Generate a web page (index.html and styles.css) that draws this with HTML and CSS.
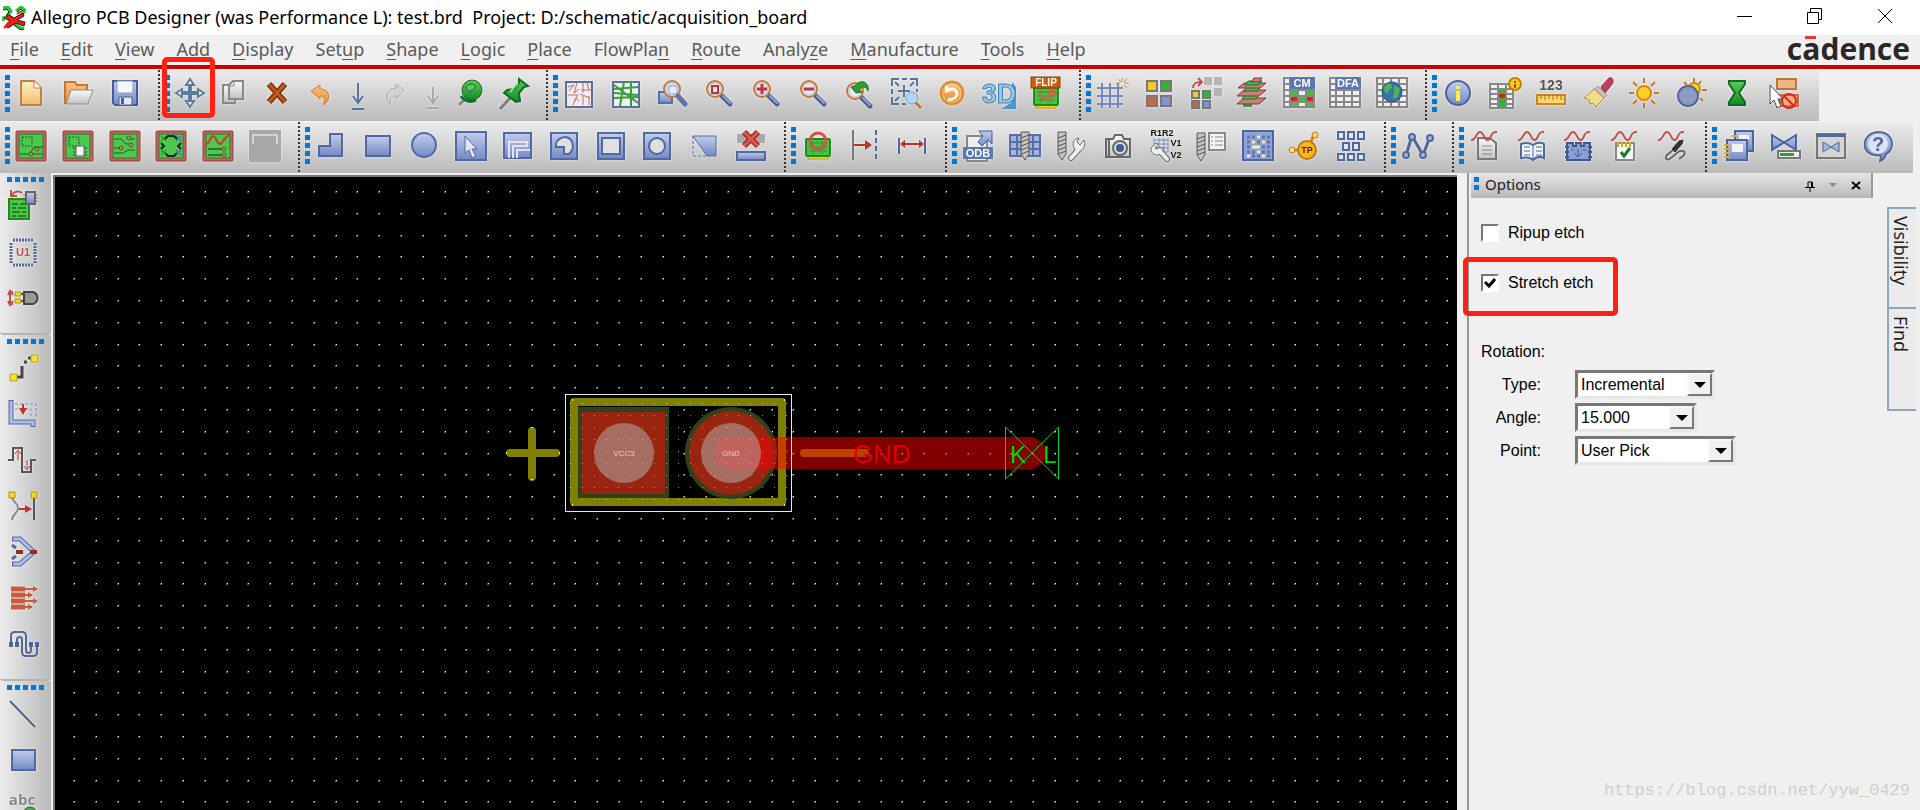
FILE: index.html
```html
<!DOCTYPE html>
<html lang="en">
<head>
  <meta charset="UTF-8">
  <title>Allegro PCB Designer</title>
  <link rel="stylesheet" href="styles.css">
</head>
<body>

<!-- shared gradients and symbols -->
<svg class="defs" aria-hidden="true">
  <defs>
    <linearGradient id="gBlue" x1="0" y1="0" x2="0" y2="1"><stop offset="0" stop-color="#c3cdea"/><stop offset="1" stop-color="#7489c4"/></linearGradient>
    <linearGradient id="gGray" x1="0" y1="0" x2="0" y2="1"><stop offset="0" stop-color="#fafafa"/><stop offset="1" stop-color="#c2c2c2"/></linearGradient>
    <linearGradient id="gPaper" x1="0" y1="0" x2="0" y2="1"><stop offset="0" stop-color="#fff0c8"/><stop offset="1" stop-color="#f2bd6c"/></linearGradient>
    <linearGradient id="gOrange" x1="0" y1="0" x2="0" y2="1"><stop offset="0" stop-color="#fbc583"/><stop offset="1" stop-color="#e68a2e"/></linearGradient>
    <linearGradient id="gGreen" x1="0" y1="0" x2="0" y2="1"><stop offset="0" stop-color="#5ccb5c"/><stop offset="1" stop-color="#128a26"/></linearGradient>
    <symbol id="lens" viewBox="0 0 32 32">
      <path d="M19 19l8 8" stroke="#4a5f94" stroke-width="5" stroke-linecap="round"/>
      <path d="M20 19l7 7" stroke="#93a5d6" stroke-width="2" stroke-linecap="round"/>
      <circle cx="12" cy="12" r="8" fill="#e6e8f6" stroke="#c47830" stroke-width="2"/>
      <circle cx="12" cy="12" r="6" fill="none" stroke="#b4bee0"/>
    </symbol>
    <symbol id="board" viewBox="0 0 32 32">
      <rect x="1" y="1" width="30" height="30" rx="1" fill="#c8605c" stroke="#8c3c3a"/>
      <rect x="4" y="4" width="24" height="24" fill="#4cc84c" stroke="#2c7a34"/>
    </symbol>
    <symbol id="wave" viewBox="0 0 32 32">
      <path d="M2 10c5 1 5-8 9-8s4 9 8 8 2-9 9-8" fill="none" stroke="#c0504d" stroke-width="2"/>
    </symbol>
    <symbol id="pcb" viewBox="0 0 32 32">
      <rect x="6" y="26" width="20" height="3" fill="#ffd42a" stroke="#c09000"/>
      <rect x="4" y="9" width="24" height="17" rx="1" fill="#44c444" stroke="#1f8a1f" stroke-width="2"/>
      <path d="M7 13h18M7 17h18M7 21h18M11 11v13M20 11v13" stroke="#2c9c2c"/>
    </symbol>
    <symbol id="table" viewBox="0 0 32 32">
      <rect x="1" y="1" width="30" height="29" fill="#f0f0f0" stroke="#888" stroke-width="2"/>
      <path d="M1 7h30M1 13h30M1 19h30M1 25h30M7 1v29M15 1v29M23 1v29" stroke="#888" stroke-width="2"/>
    </symbol>
    <symbol id="drill" viewBox="0 0 32 32">
      <path d="M11 2h8v22l-4 6-4-6z" fill="#c4c4c4" stroke="#555"/>
      <path d="M11 8l8-3M11 12l8-3M11 16l8-3M11 20l8-3M11 24l8-3" stroke="#555"/>
    </symbol>
  </defs>
</svg>

<header class="titlebar">
  <svg class="app-icon" viewBox="0 0 24 24" aria-hidden="true">
    <path d="M1 2l5-1 3 4-3 4 4 3M14 5l5-4 4 3-3 5M12 17l5 4 5 2M2 10l-1 5" stroke="#17d033" stroke-width="3"/>
    <path d="M1 4l4-1 2 3-3 4M15 6l4-3 2 2M12 19l5 4 5 1" stroke="#111"/>
    <path d="M2 12l5-3 5 3 9-5 1 3-7 4 8 2-1 4-8-3-8 5-3-2 5-5z" fill="#e8201c" stroke="#401010"/>
    <path d="M2 22l5-6M15 8l5-3" stroke="#e8201c" stroke-width="2"/>
  </svg>
  <h1>Allegro PCB Designer (was Performance L): test.brd&nbsp; Project: D:/schematic/acquisition_board</h1>
  <div class="window-buttons">
    <button aria-label="Minimize"><svg viewBox="0 0 16 16"><path d="M0 8.500h15"/></svg></button>
    <button aria-label="Restore"><svg viewBox="0 0 16 16"><path d="M.5 4.500h11v11H.5zM3.500 4.500v-4h11v11h-3"/></svg></button>
    <button aria-label="Close"><svg viewBox="0 0 16 16"><path d="M1 1l14 14M15 1L1 15"/></svg></button>
  </div>
</header>

<nav class="menubar">
  <a href="#"><u>F</u>ile</a>
  <a href="#"><u>E</u>dit</a>
  <a href="#"><u>V</u>iew</a>
  <a href="#"><u>A</u>dd</a>
  <a href="#"><u>D</u>isplay</a>
  <a href="#">Set<u>u</u>p</a>
  <a href="#"><u>S</u>hape</a>
  <a href="#"><u>L</u>ogic</a>
  <a href="#"><u>P</u>lace</a>
  <a href="#">FlowPla<u>n</u></a>
  <a href="#"><u>R</u>oute</a>
  <a href="#">Analy<u>z</u>e</a>
  <a href="#"><u>M</u>anufacture</a>
  <a href="#"><u>T</u>ools</a>
  <a href="#"><u>H</u>elp</a>
  <span class="logo">c<span class="macron">a</span>dence</span>
</nav>

<div class="toolbar-row">
  <div class="toolbar w-file">
    <button aria-label="New"><svg viewBox="0 0 32 32"><path d="M6 4h13l7 7v17H6z" fill="url(#gPaper)" stroke="#c08040" stroke-width="2"/><path d="M19 4v7h7" fill="#fff" stroke="#c08040"/></svg></button>
    <button aria-label="Open"><svg viewBox="0 0 32 32"><path d="M3 27V5h10l2 3h10v6" fill="url(#gOrange)" stroke="#c07830" stroke-width="2"/><path d="M9 13h22l-5 14H4z" fill="url(#gGray)" stroke="#888"/></svg></button>
    <button aria-label="Save"><svg viewBox="0 0 32 32"><path d="M4 4h24v24H6l-2-2z" fill="url(#gBlue)" stroke="#475c98" stroke-width="2"/><path d="M8 4h16v12H8z" fill="#f6f7fc" stroke="#8a98c4"/><path d="M10 20h13v8H10z" fill="#e5e8f2" stroke="#475c98"/><path d="M12 21h3v6h-3z" fill="#475c98"/></svg></button>
  </div>
  <div class="toolbar w-edit">
    <button aria-label="Move" class="marked"><svg viewBox="0 0 32 32"><path d="M16 2l4 6h-3v7h7v-3l6 4-6 4v-3h-7v7h3l-4 6-4-6h3v-7H8v3l-6-4 6-4v3h7V8h-3z" fill="#e6eef4" stroke="#5d7d9c" stroke-width="2"/></svg></button>
    <button aria-label="Copy"><svg viewBox="0 0 32 32"><path d="M6 8h12v18H6z" fill="url(#gGray)" stroke="#888" stroke-width="2"/><path d="M16 4h10v18H12V8z" fill="url(#gGray)" stroke="#888" stroke-width="2"/><path d="M17 4v5h-5" stroke="#888"/></svg></button>
    <button aria-label="Delete"><svg viewBox="0 0 32 32"><path d="M8 7l16 18M24 7L8 25" stroke="#7c2c08" stroke-width="6"/><path d="M8 7l16 18M24 7L8 25" stroke="#c4581c" stroke-width="3"/></svg></button>
    <button aria-label="Undo"><svg viewBox="0 0 32 32"><path d="M7 14l9-6v4c11 0 11 12 3 16 3-6 1-9-3-9v3z" fill="url(#gOrange)" stroke="#c87830"/></svg></button>
    <button aria-label="Undo steps" class="narrow"><svg viewBox="0 0 32 32"><path d="M16 6v20M11 19l5 7 5-7M10 32h12" stroke="#54759a" stroke-width="2"/></svg></button>
    <button aria-label="Redo"><svg viewBox="0 0 32 32"><path d="M25 13l-8-6v4C6 11 5 23 12 28c-2-6 0-9 5-9v3z" fill="#d2d2d2" stroke="#a8a8a8"/></svg></button>
    <button aria-label="Redo steps" class="narrow"><svg viewBox="0 0 32 32"><path d="M16 10v16M11 19l5 7 5-7M10 31h12" stroke="#aaa" stroke-width="2"/></svg></button>
    <button aria-label="Fix"><svg viewBox="0 0 32 32"><path d="M4 28l9-9" stroke="#888" stroke-width="3"/><path d="M6 19c3 5 10 7 15 4" stroke="#14702a" stroke-width="3"/><circle cx="17" cy="13" r="10" fill="url(#gGreen)" stroke="#0f6420"/><path d="M11 10c5-6 12-2 8 2s-7 2-8-2z" fill="#5fc46c" stroke="#0f6420"/></svg></button>
    <button aria-label="Unfix"><svg viewBox="0 0 32 32"><path d="M2 32l11-12" stroke="#7c7c7c" stroke-width="3"/><path d="M21 2l9 7-4 1-5 6 1 8-4 1-12-9 3-3 7-1 5-6z" fill="url(#gGreen)" stroke="#0f6a22" stroke-width="2"/><path d="M12 15l8-9" stroke="#8de08d" stroke-width="2"/></svg></button>
  </div>
  <div class="toolbar w-view">
    <button aria-label="Unrats all"><svg viewBox="0 0 32 32"><rect x="3" y="5" width="26" height="25" fill="#eeeef2" stroke="#5870a0" stroke-width="2"/><path d="M5 10l6-2-5 6M14 6l-3 10 5-4M5 18h10l-4 6M20 6v10M18 13h10M24 6l2 7M10 28l3-7 3 3M20 19v9M17 17l10 4M26 19v9" stroke="#c86a68"/></svg></button>
    <button aria-label="Rats all"><svg viewBox="0 0 32 32"><rect x="3" y="5" width="26" height="25" fill="#eef2ee" stroke="#5870a0" stroke-width="2"/><path d="M4 12l24-2M4 8l24 18M14 5l-4 24M4 21l24-1M21 5v24M4 16l24 2" stroke="#3a9c3a" stroke-width="2"/></svg></button>
    <button aria-label="Zoom points"><svg viewBox="0 0 32 32"><path d="M2 15h13v11H2z" fill="url(#gBlue)" stroke="#5870a0" stroke-width="2"/><circle cx="15" cy="12" r="8" fill="#ccd8f0" stroke="#c47830" stroke-width="2"/><path d="M12 9h8v8h-8z" fill="#e6ebf8" stroke="#93a5d6"/><path d="M21 19l7 8" stroke="#5f74ac" stroke-width="5" stroke-linecap="round"/></svg></button>
    <button aria-label="Zoom fit"><svg viewBox="0 0 32 32"><use href="#lens"/><path d="M9 9h6v7H9z" stroke="#c43434" stroke-width="2"/></svg></button>
    <button aria-label="Zoom in"><svg viewBox="0 0 32 32"><use href="#lens"/><path d="M12 7v10M7 12h10" stroke="#c43434" stroke-width="3"/></svg></button>
    <button aria-label="Zoom out"><svg viewBox="0 0 32 32"><use href="#lens"/><path d="M7 12h10" stroke="#c43434" stroke-width="3"/></svg></button>
    <button aria-label="Zoom previous"><svg viewBox="0 0 32 32"><use href="#lens" y="2"/><path d="M8 10l5 6 6-1-3-2c3-4 7-4 9 1 2-9-8-13-13-5z" fill="#2f9e2f" stroke="#1c701c"/></svg></button>
    <button aria-label="Zoom world"><svg viewBox="0 0 32 32"><path d="M2 9V2h7M20 2h7v7M2 20v7h7M12 2h5M2 12v5M27 12v3M12 27h4M14 8v12M8 14h12M5 5l4 4M24 5l-4 4M5 24l4-4" stroke="#54759a" stroke-width="2"/><path d="M25 25l6 6" stroke="#c47830" stroke-width="3"/><circle cx="22" cy="21" r="6" fill="#aed6f4" stroke="#6f9cc4"/></svg></button>
    <button aria-label="Refresh"><svg viewBox="0 0 32 32"><circle cx="16" cy="16" r="11" fill="#fff4dc" stroke="#e09030" stroke-width="3"/><circle cx="16" cy="16" r="9" fill="url(#gOrange)"/><path d="M12 22c6 2 12-4 7-9-2-2-5-1-6 0" stroke="#fffbe8" stroke-width="3"/><path d="M9 8v8l8-3z" fill="#fffbe8"/></svg></button>
    <button aria-label="3D view"><svg viewBox="0 0 32 32"><path d="M18 32h15V10l-4-5v20z" fill="#4f96cc"/><text class="icon-text t3d" x="16" y="26">3D</text></svg></button>
    <button aria-label="Flip design"><svg viewBox="0 0 32 32"><use href="#pcb" y="2"/><path d="M9 16c3 8 12 8 13 1M18 17l4-5 4 6" stroke="#d0604c" stroke-width="3"/><rect x="1" y="0" width="29" height="11" fill="#c85e10" stroke="#8e3c04"/><text class="icon-text flip" x="16" y="9">FLIP</text></svg></button>
  </div>
  <div class="toolbar w-setup">
    <button aria-label="Grid toggle"><svg viewBox="0 0 32 32"><path d="M6 6v25M14 6v25M22 6v25M1 11h26M1 19h26M1 27h26" stroke="#7488c0" stroke-width="2"/><path d="M26 1v4M26 9v3M20 6h4M28 6h5M22 2l3 3M31 2l-3 3M28 8l3 3" stroke="#d4852c"/></svg></button>
    <button aria-label="Color dialog"><svg viewBox="0 0 32 32"><g stroke="#777" stroke-width="2"><rect x="4" y="4" width="10" height="10" fill="#ffc81e"/><rect x="18" y="4" width="10" height="10" fill="#3cae3c"/><rect x="4" y="19" width="10" height="10" fill="#c86848"/><rect x="18" y="19" width="10" height="10" fill="#7f95cf"/></g></svg></button>
    <button aria-label="Swap colors"><svg viewBox="0 0 32 32"><path d="M15 0h8v8h-8zM25 0h8v8h-8zM25 11h8v8h-8z" fill="#b4b4b4"/><g stroke="#777" stroke-width="2"><rect x="3" y="14" width="7" height="7" fill="#ffc81e"/><rect x="14" y="14" width="7" height="7" fill="#3cae3c"/><rect x="3" y="24" width="7" height="7" fill="#c86848"/><rect x="14" y="24" width="7" height="7" fill="#7f95cf"/></g><path d="M4 11c0-5 3-6 8-6M9 1l4 4-4 4" stroke="#c0504d" stroke-width="2"/></svg></button>
    <button aria-label="Cross section"><svg viewBox="0 0 32 32"><path d="M7 27h9v3H7z" fill="#2fa43c"/><path d="M8 21h22l-7 6H1z" fill="#cc7c78" stroke="#7c3230"/><path d="M9 18h14l-3 4H6z" fill="#48bc50" stroke="#12702a"/><path d="M8 13h22l-7 6H1z" fill="#cc7c78" stroke="#7c3230"/><path d="M11 10h14l-4 4H7z" fill="#48bc50" stroke="#12702a"/><path d="M8 6h22l-6 5H2z" fill="#cc7c78" stroke="#7c3230"/><path d="M12 4h14l-4 4H9z" fill="#48bc50" stroke="#12702a"/><path d="M18 1h8l-3 4h-8z" fill="#cc7c78" stroke="#7c3230"/></svg></button>
    <button aria-label="Constraint manager"><svg viewBox="0 0 32 32"><use href="#table"/><path d="M8 14h6v4H8zM24 14h6v4h-6zM8 26h6v3H8zM16 20h6v4h-6zM24 26h6v3h-6z" fill="#3cc43c"/><path d="M8 20h6v4H8zM24 20h6v4h-6z" fill="#e81c1c"/><path d="M7 0h25v12H7z" fill="#5878b4"/><text class="icon-text head" x="19" y="10">CM</text></svg></button>
    <button aria-label="DFA spreadsheet"><svg viewBox="0 0 32 32"><use href="#table"/><path d="M7 0h25v12H7z" fill="#5878b4"/><text class="icon-text head" x="19" y="10">DFA</text></svg></button>
    <button aria-label="Web table"><svg viewBox="0 0 32 32"><use href="#table"/><circle cx="16" cy="15" r="10" fill="#3a72a8" stroke="#28508a"/><path d="M9 9c4-4 7-2 7 1s-5 3-4 7c-4-1-5-5-3-8zM18 8l6 4-2 8-5 2 1-6z" fill="#4ab458"/></svg></button>
  </div>
  <div class="toolbar w-info">
    <button aria-label="Show element"><svg viewBox="0 0 32 32"><circle cx="16" cy="16" r="12" fill="url(#gBlue)" stroke="#4c659f" stroke-width="2"/><path d="M16 9v3M16 14v10" stroke="#ffee3c" stroke-width="4"/></svg></button>
    <button aria-label="Constraint info"><svg viewBox="0 0 32 32"><path d="M1 7h23v24H1zM1 12h23M1 17h23M1 22h23M1 27h23M9 7v24M17 7v24" fill="#f0f0f0" stroke="#888" stroke-width="2"/><path d="M10 13h6v17h-6z" fill="#3cae3c"/><path d="M10 17h6v4h-6z" fill="#e01c1c"/><circle cx="26" cy="7" r="6" fill="#ffc81e" stroke="#c08000" stroke-width="2"/><path d="M26 4v2M26 7v4" stroke="#8e5c00" stroke-width="2"/></svg></button>
    <button aria-label="Measure"><svg viewBox="0 0 32 32"><text class="icon-text ruler" x="16" y="13">123</text><rect x="2" y="18" width="28" height="9" fill="#ffd66a" stroke="#c8852c" stroke-width="2"/><path d="M6 18v4M10 18v5M14 18v4M18 18v5M22 18v4M26 18v5" stroke="#a86814"/></svg></button>
    <button aria-label="Highlight"><svg viewBox="0 0 32 32"><path d="M19 10l8-9c4-1 5 3 3 6l-7 9z" fill="#c43c64" stroke="#8e2444"/><path d="M16 9l9 9-3 3-10-9z" fill="#d8b8c0" stroke="#999"/><path d="M12 12l10 9-8 9-3-4-3 1-1-4-5-2z" fill="#f0dc8a" stroke="#a48a34"/></svg></button>
    <button aria-label="Shadow off"><svg viewBox="0 0 32 32"><path d="M16 1v5M16 26v5M1 16h5M26 16h5M5 5l4 4M23 23l4 4M27 5l-4 4M9 23l-4 4" stroke="#c8762c" stroke-width="2"/><circle cx="16" cy="16" r="7" fill="#ffd01e" stroke="#d08a20" stroke-width="2"/></svg></button>
    <button aria-label="Shadow on"><svg viewBox="0 0 32 32"><path d="M19 1v5M27 13h5M26 4l-3 4M9 5l3 3M25 21l3 3" stroke="#c8762c" stroke-width="2"/><circle cx="19" cy="12" r="6" fill="#ffd01e" stroke="#d08a20" stroke-width="2"/><circle cx="13" cy="19" r="10" fill="#8c9cc0" stroke="#51689a" stroke-width="2"/></svg></button>
    <button aria-label="Waive"><svg viewBox="0 0 32 32"><path d="M8 4h16v3l-6 9 6 9v3H8v-3l6-9-6-9z" fill="url(#gGreen)" stroke="#0f6a22" stroke-width="2"/></svg></button>
    <button aria-label="Deselect"><svg viewBox="0 0 32 32"><rect x="9" y="2" width="19" height="10" fill="#f0b482" stroke="#b4783c" stroke-width="2"/><rect x="12" y="18" width="18" height="11" fill="#f0b482" stroke="#b4783c" stroke-width="2"/><circle cx="21" cy="24" r="7" stroke="#f01c1c" stroke-width="2"/><path d="M16 19l10 10" stroke="#f01c1c" stroke-width="2"/><path d="M2 8v19l4-4 3 8 4-2-3-7h5z" fill="#fff" stroke="#444"/></svg></button>
  </div>
</div>

<div class="toolbar-row lower">
  <div class="toolbar w-app">
    <button aria-label="General edit"><svg viewBox="0 0 32 32"><use href="#board"/><path d="M7 7h10v9H7z" stroke="#235c23" stroke-dasharray="2 1"/><path d="M5 24h9M16 22l3-5h9M18 24h10" stroke="#235c23"/><circle cx="16" cy="24" r="2" stroke="#a03030"/><circle cx="22" cy="19" r="2" stroke="#a03030"/></svg></button>
    <button aria-label="Placement edit"><svg viewBox="0 0 32 32"><use href="#board"/><path d="M7 7h10v9H7z" stroke="#235c23" stroke-dasharray="2 1"/><path d="M11 18h14M11 22h14M11 25h14" stroke="#444"/><rect x="14" y="16" width="8" height="10" fill="#f2f2f2" stroke="#666"/></svg></button>
    <button aria-label="Etch edit"><svg viewBox="0 0 32 32"><use href="#board"/><path d="M5 9h7l5 5h3M5 18h6M26 9h-4M5 23h9l5-3h7" stroke="#235c23"/><circle cx="20" cy="8" r="2" stroke="#a03030"/><circle cx="22" cy="15" r="2" stroke="#a03030"/><circle cx="12" cy="18" r="2" stroke="#a03030"/></svg></button>
    <button aria-label="Flow planning"><svg viewBox="0 0 32 32"><use href="#board"/><path d="M10 9l3-3h6l3 3M10 23l3 3h6l3-3M6 13l3 3-3 3M26 13l-3 3 3 3" stroke="#222" stroke-width="2"/><path d="M6 6l5 5M11 6l-5 5M21 6l5 5M26 6l-5 5M6 20l5 5M11 20l-5 5M21 20l5 5M26 20l-5 5" stroke="#37598a"/></svg></button>
    <button aria-label="Signal integrity"><svg viewBox="0 0 32 32"><use href="#board"/><path d="M4 14c4 0 4-8 7-8s4 8 7 8 4-8 10-9" stroke="#d03434" stroke-width="2"/><path d="M6 19h14M6 25h14" stroke="#2f7434" stroke-width="2"/><circle cx="22" cy="19" r="2" stroke="#a03030"/><circle cx="22" cy="25" r="2" stroke="#a03030"/></svg></button>
    <button aria-label="RF edit" disabled><svg viewBox="0 0 32 32"><path d="M0 0h32v32H0z" fill="#a8a8a8"/><path d="M4 14V5h24v9" stroke="#d4d4d4" stroke-width="2"/></svg></button>
  </div>
  <div class="toolbar w-shape">
    <button aria-label="Polygon shape"><svg viewBox="0 0 32 32"><path d="M15 4h12v22H4V16h11z" fill="url(#gBlue)" stroke="#5068a4" stroke-width="2"/></svg></button>
    <button aria-label="Rectangle shape"><svg viewBox="0 0 32 32"><path d="M4 6h24v20H4z" fill="url(#gBlue)" stroke="#5068a4" stroke-width="2"/></svg></button>
    <button aria-label="Circle shape"><svg viewBox="0 0 32 32"><circle cx="16" cy="15" r="12" fill="url(#gBlue)" stroke="#5068a4" stroke-width="2"/></svg></button>
    <button aria-label="Select shape"><svg viewBox="0 0 32 32"><path d="M1 2h30v28H1z" fill="url(#gBlue)" stroke="#5068a4" stroke-width="2"/><path d="M10 6v17l4-3 3 8 4-2-4-7h5z" fill="#e2e5ee" stroke="#5068a4"/></svg></button>
    <button aria-label="Edit boundary"><svg viewBox="0 0 32 32"><path d="M2 3h27v25H2z" fill="url(#gBlue)" stroke="#5068a4" stroke-width="2"/><path d="M7 28V12h18v4H11v12M15 28v-8h13" stroke="#e2e5ee" stroke-width="2"/></svg></button>
    <button aria-label="Polygon void"><svg viewBox="0 0 32 32"><path d="M3 3h26v26H3z" fill="url(#gBlue)" stroke="#5068a4" stroke-width="2"/><path d="M8 17v-3c1-5 6-7 10-7 8 2 9 12 3 17h-5v-7z" fill="#e0e0e0" stroke="#5068a4" stroke-width="2"/></svg></button>
    <button aria-label="Rectangle void"><svg viewBox="0 0 32 32"><path d="M3 3h26v26H3z" fill="url(#gBlue)" stroke="#5068a4" stroke-width="2"/><path d="M7 8h18v16H7z" fill="#e0e0e0" stroke="#5068a4" stroke-width="2"/></svg></button>
    <button aria-label="Circle void"><svg viewBox="0 0 32 32"><path d="M3 3h26v26H3z" fill="url(#gBlue)" stroke="#5068a4" stroke-width="2"/><circle cx="16" cy="16" r="8" fill="#e0e0e0" stroke="#5068a4" stroke-width="2"/></svg></button>
    <button aria-label="Delete islands"><svg viewBox="0 0 32 32"><path d="M5 6h23v20H19z" fill="url(#gBlue)" stroke="#5068a4"/><path d="M5 6v20h14" stroke="#5068a4" stroke-dasharray="3 2"/></svg></button>
    <button aria-label="Delete shape"><svg viewBox="0 0 32 32"><path d="M2 4h28v9H2z" fill="#aaa"/><path d="M2 22h28v8H2z" fill="url(#gBlue)" stroke="#5068a4" stroke-width="2"/><path d="M9 2l14 14M23 2L9 16" stroke="#9c2c20" stroke-width="6"/><path d="M9 2l14 14M23 2L9 16" stroke="#e05848" stroke-width="3"/></svg></button>
  </div>
  <div class="toolbar w-dim">
    <button aria-label="Dimension environment"><svg viewBox="0 0 32 32"><use href="#pcb"/><circle cx="16" cy="11" r="8" stroke="#d85048" stroke-width="3"/></svg></button>
    <button aria-label="Linear dimension"><svg viewBox="0 0 32 32"><path d="M4 0v30" stroke="#777" stroke-width="2"/><path d="M27 0v30" stroke="#51689a" stroke-width="2" stroke-dasharray="5 3"/><path d="M5 15h13" stroke="#c03030" stroke-width="2"/><path d="M16 10l7 5-7 5z" fill="#c03030"/></svg></button>
    <button aria-label="Distance"><svg viewBox="0 0 32 32"><path d="M3 8v16M29 8v16" stroke="#51689a" stroke-width="2"/><path d="M6 14h20" stroke="#c03030" stroke-width="2"/><path d="M9 10v8l-5-4zM23 10v8l5-4z" fill="#c03030"/></svg></button>
  </div>
  <div class="toolbar w-mfg">
    <button aria-label="ODB++ out"><svg viewBox="0 0 32 32"><path d="M5 6h20v25H5z" fill="#eee" stroke="#888" stroke-width="2"/><path d="M17 1h13v13l-4-4-6 6-4-4 5-6z" fill="url(#gBlue)" stroke="#40588c"/><path d="M1 17h30v12H1z" fill="#5878b4"/><text class="icon-text head" x="16" y="27">ODB</text></svg></button>
    <button aria-label="NC route"><svg viewBox="0 0 32 32"><path d="M1 5h30v21H1zM1 12h30M1 19h30M8 5v21M24 5v21" fill="#a4b4e0" stroke="#566fa8" stroke-width="2"/><use href="#drill" x="1"/></svg></button>
    <button aria-label="NC parameters"><svg viewBox="0 0 32 32"><use href="#drill" x="-8"/><path d="M16 28l7-8" stroke="#666" stroke-width="6" stroke-linecap="round"/><path d="M29 10l-4 5-3-3 2-4c-6 1-7 6-5 10l2 3c5 2 11-4 8-11z" fill="#eee" stroke="#666"/><path d="M16 28l8-9" stroke="#eee" stroke-width="4" stroke-linecap="round"/></svg></button>
    <button aria-label="Artwork"><svg viewBox="0 0 32 32"><path d="M4 9h7l2-4h7l2 4h6v18H4z" fill="url(#gGray)" stroke="#666" stroke-width="2"/><path d="M7 9v18" stroke="#666" stroke-width="2"/><circle cx="18" cy="18" r="7" fill="#ddd" stroke="#666" stroke-width="2"/><circle cx="18" cy="18" r="4" fill="#415c94"/></svg></button>
    <button aria-label="Auto rename"><svg viewBox="0 0 32 32"><path d="M5 10h14M5 14h14M5 18h14M5 22h14M5 8v14M10 8v14M15 8v14M19 8v14" stroke="#7488c0"/><path d="M10 20l8 9" stroke="#666" stroke-width="6" stroke-linecap="round"/><path d="M2 18l5-5 2 1-3 4 3 2 4-3 1 3-4 5c-5 1-9-3-8-7z" fill="#eee" stroke="#666"/><path d="M10 20l8 9" stroke="#eee" stroke-width="4" stroke-linecap="round"/><text class="icon-text mini" x="13" y="6">R1R2</text><text class="icon-text mini" x="27" y="16">V1</text><text class="icon-text mini" x="27" y="28">V2</text></svg></button>
    <button aria-label="Drill legend"><svg viewBox="0 0 32 32"><use href="#drill" x="-9" y="1"/><path d="M14 3h16v17H14z" fill="#f4f4f4" stroke="#888" stroke-width="2"/><path d="M16 7h2M20 7h8M16 11h2M20 11h8M16 15h2M20 15h8" stroke="#888"/></svg></button>
    <button aria-label="Drill customization"><svg viewBox="0 0 32 32"><path d="M1 1h30v29H1z" fill="#8fa3d8" stroke="#4c659f" stroke-width="2"/><path d="M5 7h23M5 12h23M5 17h23M5 22h23M5 26h23" stroke="#5d76b0" stroke-width="3" stroke-dasharray="3 2"/><path d="M15 7h3M10 12h3M20 12h3M10 17h8M15 22h3M5 26h3M20 26h3" stroke="#fff0b4" stroke-width="3"/></svg></button>
    <button aria-label="Testprep"><svg viewBox="0 0 32 32"><path d="M4 20h10M22 14l4-10" stroke="#c8861c" stroke-width="3"/><circle cx="4" cy="20" r="3" fill="#ffd97a" stroke="#b87814"/><circle cx="27" cy="5" r="3" fill="#ffd97a" stroke="#b87814"/><circle cx="19" cy="20" r="9" fill="#ffb41e" stroke="#b87814" stroke-width="2"/><text class="icon-text tp" x="19" y="23">TP</text></svg></button>
    <button aria-label="Thieving"><svg viewBox="0 0 32 32"><g fill="#dfe6f6" stroke="#51689a" stroke-width="2"><rect x="3" y="2" width="6" height="7"/><rect x="13" y="2" width="6" height="7"/><rect x="23" y="2" width="6" height="7"/><rect x="8" y="13" width="6" height="7"/><rect x="18" y="13" width="6" height="7"/><rect x="3" y="24" width="6" height="6"/><rect x="13" y="24" width="6" height="6"/><rect x="23" y="24" width="6" height="6"/></g></svg></button>
  </div>
  <div class="toolbar w-path">
    <button aria-label="Net schedule"><svg viewBox="0 0 32 32"><path d="M4 25L10 6l11 19 7-18" stroke="#51689a" stroke-width="3"/><g fill="#a8b6de" stroke="#51689a" stroke-width="2"><circle cx="4" cy="25" r="3"/><circle cx="10" cy="7" r="3"/><circle cx="21" cy="25" r="3"/><circle cx="28" cy="8" r="3"/></g></svg></button>
  </div>
  <div class="toolbar w-si">
    <button aria-label="Signal model"><svg viewBox="0 0 32 32"><path d="M9 8h12l6 5v16H9z" fill="url(#gGray)" stroke="#777" stroke-width="2"/><path d="M13 16h10M13 20h10M13 24h10" stroke="#888"/><use href="#wave"/></svg></button>
    <button aria-label="Signal library"><svg viewBox="0 0 32 32"><use href="#wave"/><path d="M5 14c5-2 9-1 12 1 3-2 7-3 11-1v14c-4-2-8-1-11 2-3-3-7-3-12-2z" fill="#f2f4fa" stroke="#51689a" stroke-width="2"/><path d="M17 15v14M8 17h6M8 21h6M8 25h6M20 17h6M20 21h6M20 25h6" stroke="#51689a"/></svg></button>
    <button aria-label="Signal audit"><svg viewBox="0 0 32 32"><use href="#wave"/><path d="M5 13h6v3h3v-3h5v3h3v-3h6v17H5z" fill="#8ba0d8" stroke="#40588c" stroke-width="2"/><path d="M3 17h4M3 22h4M3 27h4M26 17h4M26 22h4M26 27h4" stroke="#40588c" stroke-width="2"/><path d="M16 19v8M12 23l4 4 4-4M9 20h3M21 20h3" stroke="#40588c"/></svg></button>
    <button aria-label="Signal check"><svg viewBox="0 0 32 32"><use href="#wave"/><path d="M7 13h18v17H7z" fill="#fafafa" stroke="#888" stroke-width="2"/><path d="M9 12v5M13 12v5M17 12v5M21 12v5" stroke="#e0a81c" stroke-width="2"/><path d="M12 22l3 4 6-8" stroke="#14802a" stroke-width="3"/></svg></button>
    <button aria-label="Signal probe"><svg viewBox="0 0 32 32"><use href="#wave"/><path d="M27 10l-4 1-7 8 3 3 7-8z" fill="#333" stroke="#333"/><path d="M17 20l-6 5c-3 4 0 6 4 3l7-6c5-3 9 0 5 4l-4 3" stroke="#666" stroke-width="2"/></svg></button>
  </div>
  <div class="toolbar w-help">
    <button aria-label="Reports"><svg viewBox="0 0 32 32"><path d="M13 1h18v20H13z" fill="url(#gBlue)" stroke="#4c659f" stroke-width="2"/><path d="M17 5h10v5H17z" fill="#f2f4fa"/><path d="M5 10h20v20H5z" fill="url(#gBlue)" stroke="#4c659f" stroke-width="2"/><path d="M10 14h11v8H10z" fill="#f2f4fa"/><path d="M2 15h6M2 19h6M2 23h6M2 27h6M9 6h6" stroke="#e0b01c" stroke-width="2"/></svg></button>
    <button aria-label="Update DRC"><svg viewBox="0 0 32 32"><path d="M3 5l24 15V5L3 20z" fill="url(#gBlue)" stroke="#4c659f" stroke-width="2"/><path d="M9 21h22v7H9z" fill="#eee" stroke="#777" stroke-width="2"/><path d="M11 23h14v3H11z" fill="#28a428"/></svg></button>
    <button aria-label="DRC browser"><svg viewBox="0 0 32 32"><path d="M2 4h28v24H2z" fill="#d4d4d4" stroke="#777" stroke-width="2"/><path d="M2 4h28v3H2z" fill="#51689a"/><path d="M8 12l16 10V12L8 22z" fill="#a8b6de" stroke="#4c659f"/></svg></button>
    <button aria-label="Help"><svg viewBox="0 0 32 32"><path d="M16 2c17 0 17 18 8 22-1 4-3 6-6 7 1-3 1-5 0-6C-2 28-2 3 16 2z" fill="url(#gBlue)" stroke="#51689a" stroke-width="2"/><circle cx="16" cy="14" r="10" fill="#dce3f4"/><text class="icon-text help" x="16" y="21">?</text></svg></button>
  </div>
</div>

<main class="main">
  <aside class="sidebar">
    <div class="side-group">
      <button aria-label="Place manually"><svg viewBox="0 0 32 32"><path d="M2 9h20v20H2z" fill="#4cc44c" stroke="#1f8a1f" stroke-width="2"/><path d="M5 14h6M13 14h6M5 18h4M11 18h8M5 22h8M15 22h4M5 26h4M11 26h8" stroke="#218421" stroke-width="2"/><path d="M15 3c-4-3-8-1-10 2M4 0v6h6" stroke="#c0504d" stroke-width="2"/><path d="M16 5h15M16 8h15M16 11h15" stroke="#777"/><path d="M19 2h9v12h-9z" fill="url(#gBlue)" stroke="#666" stroke-width="2"/></svg></button>
      <button aria-label="Place component"><svg viewBox="0 0 32 32"><path d="M6 4h21M6 29h21M4 7v20M28 7v20" stroke="#51689a" stroke-width="3" stroke-dasharray="2 1"/><text class="icon-text ref" x="16" y="20">U1</text></svg></button>
      <button aria-label="Swap gates"><svg viewBox="0 0 32 32"><path d="M6 10H3v12h3M1 13l2-4 3 4M1 19l2 4 3-4" stroke="#c0504d" stroke-width="2"/><path d="M8 12h9M8 19h9" stroke="#444" stroke-width="2"/><path d="M8 10h6v4H8zM8 17h6v4H8z" fill="#f0dc28" stroke="#a49414"/><path d="M17 10h9c6 2 6 10 0 12h-9z" fill="#999" stroke="#444" stroke-width="2"/></svg></button>
    </div>
    <div class="side-group">
      <button aria-label="Add connect"><svg viewBox="0 0 32 32"><path d="M7 25h8V14" stroke="#444" stroke-width="3"/><path d="M17 10h3M21 6h3" stroke="#444" stroke-width="3"/><path d="M3 22h7v7H3zM24 3h7v7h-7z" fill="#f4e038" stroke="#b0a020"/></svg></button>
      <button aria-label="Slide"><svg viewBox="0 0 32 32"><path d="M8 6h21v13M8 11h16v9" stroke="#7488c0" stroke-dasharray="3 2"/><path d="M4 2v22h22v5" stroke="#4c659f" stroke-width="5"/><path d="M4 3v21h22v4" stroke="#aebce4" stroke-width="3"/><path d="M16 6v5" stroke="#c03030" stroke-width="2"/><path d="M12 10h8l-4 7z" fill="#c03030"/></svg></button>
      <button aria-label="Delay tune"><svg viewBox="0 0 32 32"><path d="M1 16h5V4h9v24h9V16h5" stroke="#555" stroke-width="2"/><path d="M11 16V8M8 10l3-4 3 4M20 16v8M17 22l3 4 3-4" stroke="#c03030"/></svg></button>
      <button aria-label="Custom smooth"><svg viewBox="0 0 32 32"><path d="M5 6c0 7 6 6 6 12s-6 6-6 12" stroke="#888" stroke-width="2"/><path d="M27 6v24" stroke="#555" stroke-width="2"/><path d="M12 19h8" stroke="#c03030" stroke-width="2"/><path d="M18 15l7 4-7 4z" fill="#c03030"/><path d="M2 2h6v6H2zM24 2h6v6h-6z" fill="#f0dc28" stroke="#a49414"/></svg></button>
      <button aria-label="Fanout"><svg viewBox="0 0 32 32"><path d="M5 3h8l14 13-14 12H5" stroke="#4c659f" stroke-width="5"/><path d="M6 3h7l14 13-14 12H6" stroke="#aebce4" stroke-width="3"/><path d="M5 9l4 3M5 23l4-3" stroke="#51689a" stroke-width="3"/><path d="M9 14h7v4H9zM23 14h7v4h-7z" fill="#902c2c"/></svg></button>
      <button aria-label="Spread"><svg viewBox="0 0 32 32"><path d="M4 7h14M4 13h14M4 19h14M4 25h14" stroke="#c85c40" stroke-width="5"/><path d="M18 7h12M18 13h7M18 19h12M18 25h7" stroke="#c85c40" stroke-width="2"/><path d="M26 4l5 3-5 3zM21 10l5 3-5 3zM26 16l5 3-5 3zM21 22l5 3-5 3z" fill="#c85c40"/></svg></button>
      <button aria-label="Phase tune"><svg viewBox="0 0 32 32"><path d="M4 16V8c0-3 1-4 4-4h7c3 0 4 1 4 4v14c0 4 5 4 5 0v-6M10 16v-4c0-4 5-4 5 0v12c0 3 1 4 4 4h7c3 0 4-1 4-4v-8" stroke="#54678c" stroke-width="2"/><path d="M2 14h4v5H2zM8 14h4v5H8zM22 14h4v5h-4zM28 14h4v5h-4z" fill="#4c659f"/></svg></button>
    </div>
    <div class="side-group">
      <button aria-label="Add line"><svg viewBox="0 0 32 32"><path d="M3 3l25 26" stroke="#4f6284" stroke-width="2"/></svg></button>
      <button aria-label="Add rectangle"><svg viewBox="0 0 32 32"><path d="M5 6h23v20H5z" fill="url(#gBlue)" stroke="#5068a4" stroke-width="2"/></svg></button>
      <button aria-label="Add text"><svg viewBox="0 0 32 32"><circle cx="23" cy="24" r="7" fill="#3cae3c" stroke="#1b741b"/><path d="M23 20v8M19 24h8" stroke="#fff" stroke-width="2"/><text class="icon-text abc" x="15" y="15">abc</text></svg></button>
    </div>
  </aside>

  <section class="workspace">
    <canvas id="grid"></canvas>
    <svg class="design">
      <defs>
        <pattern id="fine" width="12" height="12" patternUnits="userSpaceOnUse"><rect x="5" y="9" width="1" height="1" fill="#fff"/></pattern>
      </defs>
      <g transform="translate(510 217)">
        <g stroke="#808000" stroke-width="8" stroke-linecap="round" stroke-linejoin="round" fill="none">
          <rect x="9" y="8" width="208" height="100"/>
          <path d="M-55 59h46M-33 37v46M239 59h61"/>
        </g>
        <rect x="13" y="13" width="91" height="91" fill="#2e431c"/>
        <rect x="17" y="18" width="83" height="82" fill="#992511"/>
        <circle cx="166" cy="59" r="46" fill="#2e431c"/>
        <circle cx="166" cy="59" r="42" fill="#992511"/>
        <path d="M166 43h302l10 6 4 10-4 10-10 6H166a16 16 0 0 1 0-32z" fill="#f00" opacity=".5"/>
        <g fill="#b4b4b4" opacity=".5">
          <circle cx="59" cy="59" r="30"/>
          <circle cx="166" cy="59" r="30"/>
        </g>
        <rect width="226" height="117" fill="url(#fine)" opacity=".5"/>
        <rect x=".5" y=".5" width="226" height="117" fill="none" stroke="#e8e8e8"/>
        <path d="M-59 59h1M-6 59h1M-33 33v1M-33 85v1M7 6h1M219 6h1M7 111h1M219 111h1" stroke="#ff0" stroke-width="2"/>
        <g class="pad-text">
          <text x="59" y="62">VCC3</text>
          <text x="166" y="62">GND</text>
        </g>
        <text class="net-text" x="317" y="69">GND</text>
        <path d="M440.500 33v52L493.500 33v52L440.500 33" fill="none" stroke="#00d800"/>
        <text class="via-text" x="453" y="69">K</text>
        <text class="via-text" x="485" y="69">L</text>
      </g>
    </svg>
  </section>

  <section class="options">
    <header class="options-head">
      <h2>Options</h2>
      <button aria-label="Pin"><svg viewBox="0 0 12 12"><path d="M4 7V2h4v5M1 7.500h10M6 8v4" stroke="#000"/><path d="M8 2v5" stroke="#000" stroke-width="2"/></svg></button>
      <button aria-label="Panel menu"><svg viewBox="0 0 12 12"><path d="M2 3h8L6 7z" fill="#888"/></svg></button>
      <button aria-label="Close panel"><svg viewBox="0 0 12 12"><path d="M2 2l8 7M10 2L2 9" stroke="#000" stroke-width="2"/></svg></button>
    </header>
    <form class="options-form">
      <label class="check"><input type="checkbox">Ripup etch</label>
      <label class="check framed"><input type="checkbox" checked>Stretch etch</label>
      <p class="legend">Rotation:</p>
      <div class="field">
        <label for="rotType">Type:</label>
        <div class="combo mid"><select id="rotType"><option>Incremental</option></select><span class="arrow"></span></div>
      </div>
      <div class="field">
        <label for="rotAngle">Angle:</label>
        <div class="combo short"><input type="text" id="rotAngle" value="15.000"><button type="button" class="arrow" aria-label="Angles"></button></div>
      </div>
      <div class="field">
        <label for="rotPoint">Point:</label>
        <div class="combo long"><select id="rotPoint"><option>User Pick</option></select><span class="arrow"></span></div>
      </div>
    </form>
    <span class="watermark">https://blog.csdn.net/yyw_0429</span>
  </section>

  <div class="side-tabs">
    <button>Visibility</button>
    <button>Find</button>
  </div>
</main>

<script>
  const grid = document.getElementById('grid');
  const pitch = 21.8;

  // grid dots, snapped to whole pixels
  function drawGrid() {
    grid.width = grid.clientWidth;
    grid.height = grid.clientHeight;
    const ctx = grid.getContext('2d');
    for (let y = 14; y < grid.height; y += pitch) {
      for (let x = 19; x < grid.width; x += pitch) {
        const px = Math.round(x);
        const py = Math.round(y);
        ctx.fillStyle = '#5a5a5a';
        ctx.fillRect(px - 1, py, 2, 2);
        ctx.fillStyle = '#f4f4f4';
        ctx.fillRect(px, py, 1, 1);
      }
    }
  }

  window.addEventListener('resize', drawGrid);
  drawGrid();
</script>
</body>
</html>
```
FILE: styles.css
```css
*,
*::before,
*::after {
  box-sizing: border-box;
}

body {
  margin: 0;
  height: 100vh;
  display: flex;
  flex-direction: column;
  overflow: hidden;
  background: #f0f0f0;
  font-family: "Noto Sans", "Open Sans", sans-serif;
  color: #000;
}

button {
  padding: 0;
  border: none;
  background: none;
  font: inherit;
  color: inherit;
}

svg {
  fill: none;
}

.defs {
  position: absolute;
  width: 0;
  height: 0;
}

/* title bar */
.titlebar {
  display: flex;
  align-items: center;
  flex: none;
  height: 35px;
  padding-left: 2px;
  background: #fff;
}

.app-icon {
  width: 24px;
  height: 24px;
}

.titlebar h1 {
  flex: 1;
  margin: 0 0 0 5px;
  padding-bottom: 2px;
  font-size: 18px;
  font-weight: 400;
  white-space: nowrap;
}

.window-buttons {
  display: flex;
}

.window-buttons button {
  width: 70px;
  height: 34px;
}

.window-buttons svg {
  width: 16px;
  height: 16px;
  stroke: #000;
}

/* menu bar */
.menubar {
  display: flex;
  align-items: center;
  flex: none;
  gap: 22px;
  height: 34px;
  padding: 0 10px 2px;
  border-bottom: 4px solid #cc0000;
}

.menubar a {
  color: #5a5a5a;
  font-size: 18px;
  line-height: 24px;
  text-decoration: none;
}

.menubar u {
  text-underline-offset: 3px;
}

.logo {
  margin-left: auto;
  color: #2b2728;
  font-family: "Open Sans", sans-serif;
  font-size: 30px;
  font-weight: 700;
  line-height: 30px;
}

.macron {
  position: relative;
}

.macron::after {
  content: "";
  position: absolute;
  top: 8px;
  left: 3px;
  width: 11px;
  height: 3px;
  background: #e8363c;
}

/* toolbars */
.toolbar-row {
  display: flex;
  flex: none;
  height: 52px;
  border-top: 1px solid #f4f4f4;
}

.toolbar {
  position: relative;
  display: flex;
  flex: none;
  align-items: stretch;
  padding: 0 12px 6px 8px;
  background: linear-gradient(#ebebeb, #bababa);
}

.lower .toolbar {
  padding-bottom: 4px;
}

.toolbar::before {
  content: "";
  position: absolute;
  top: 5px;
  left: 5px;
  width: 5px;
  height: 37px;
  background: repeating-linear-gradient(#0078d7 0 5px, transparent 5px 8px);
}

.toolbar:not(:last-child)::after {
  content: "";
  position: absolute;
  top: 0;
  right: 0;
  width: 2px;
  height: 100%;
  background: repeating-linear-gradient(#333 0 2px, transparent 2px 4px);
}

.toolbar button {
  position: relative;
  flex: 1;
  display: flex;
  align-items: center;
  justify-content: center;
}

.toolbar .narrow {
  flex: 0 0 22px;
}

.toolbar svg,
.side-group svg {
  flex: none;
  width: 32px;
  height: 32px;
  overflow: visible;
  filter: drop-shadow(0 0 1px rgba(255, 255, 255, 0.7));
}

.w-file { width: 160px; }
.w-edit { width: 388px; }
.w-view { width: 533px; }
.w-setup { width: 346px; }
.w-info { width: 392px; }
.w-app { width: 300px; }
.w-shape { width: 486px; }
.w-dim { width: 161px; }
.w-mfg { width: 439px; }
.w-path { width: 68px; }
.w-si { width: 253px; }
.w-help { width: 206px; }

.marked::after {
  content: "";
  position: absolute;
  z-index: 2;
  top: -13px;
  left: -6px;
  width: 53px;
  height: 61px;
  border: 5px solid #ff2113;
  border-radius: 5px;
}

/* lettering inside icons */
.icon-text {
  font-family: "Liberation Sans", sans-serif;
  font-weight: 700;
  text-anchor: middle;
}

.t3d {
  font-size: 27px;
  fill: #9cc8ea;
  stroke: #3f7fb4;
}

.flip {
  font-size: 10px;
  fill: #fff;
}

.head {
  font-size: 11px;
  fill: #fff;
}

.ruler {
  font-size: 14px;
  fill: #555;
}

.mini {
  font-size: 9px;
  fill: #111;
}

.tp {
  font-size: 9px;
  fill: #4a2c00;
}

.help {
  font-size: 20px;
  fill: #51689a;
}

.ref {
  font-size: 11px;
  fill: #c0504d;
}

.abc {
  font-family: "Open Sans", sans-serif;
  font-size: 15px;
  fill: #888;
}

/* work area */
.main {
  display: flex;
  flex: 1;
  min-height: 0;
}

.sidebar {
  flex: none;
  width: 51px;
  overflow: hidden;
}

.side-group {
  position: relative;
  display: flex;
  flex-direction: column;
  padding: 10px 5px 12px 0;
  border-bottom: 2px solid #b4b4b4;
  border-radius: 0 0 4px 4px;
  background: linear-gradient(90deg, #ececec, #bababa);
}

.side-group::before {
  content: "";
  position: absolute;
  top: 4px;
  left: 7px;
  width: 37px;
  height: 5px;
  background: repeating-linear-gradient(90deg, #0078d7 0 5px, transparent 5px 8px);
}

.side-group button {
  display: flex;
  align-items: center;
  justify-content: center;
  height: 46px;
}

.workspace {
  position: relative;
  flex: 1;
  min-width: 0;
  margin: 2px 0 0 2px;
  border-top: 2px solid #777;
  border-left: 2px solid #777;
  background: #000;
  overflow: hidden;
}

#grid,
.design {
  position: absolute;
  inset: 0;
  width: 100%;
  height: 100%;
}

.pad-text {
  font: 8px "Liberation Sans", sans-serif;
  fill: #e8c8c4;
  text-anchor: middle;
}

.net-text {
  font: 26px "Liberation Sans", sans-serif;
  fill: #e00000;
  text-anchor: middle;
}

.via-text {
  font: 24px "Liberation Sans", sans-serif;
  fill: #00d800;
  text-anchor: middle;
}

/* options panel */
.options {
  display: flex;
  flex-direction: column;
  flex: none;
  width: 406px;
  margin-left: 10px;
  padding-left: 2px;
  border-left: 2px solid #999;
}

.options-head {
  display: flex;
  align-items: center;
  gap: 11px;
  height: 25px;
  padding: 0 9px 0 14px;
  border-right: 2px solid #999;
  background: linear-gradient(#e6e6e6, #b8b8b8);
  position: relative;
}

.options-head::before {
  content: "";
  position: absolute;
  top: 4px;
  left: 3px;
  width: 5px;
  height: 13px;
  background: repeating-linear-gradient(#0078d7 0 5px, transparent 5px 8px);
}

.options-head h2 {
  flex: 1;
  margin: 0;
  padding-bottom: 4px;
  color: #1b1b2b;
  font-size: 15px;
  font-weight: 400;
  line-height: 20px;
}

.options-head button {
  width: 12px;
  height: 12px;
  display: flex;
}

.options-form {
  display: flex;
  flex-direction: column;
  flex: 1;
  padding: 24px 10px;
  font: 16px "Liberation Sans", sans-serif;
}

.check {
  position: relative;
  display: flex;
  align-items: center;
  align-self: flex-start;
  gap: 9px;
  height: 22px;
  margin-bottom: 28px;
}

.check input {
  appearance: none;
  width: 18px;
  height: 18px;
  margin: 0;
  border: 2px solid;
  border-color: #777 #fff #fff #777;
  background: #fff;
}

.check input:checked {
  background: #fff url("data:image/svg+xml,%3Csvg xmlns='http://www.w3.org/2000/svg' viewBox='0 0 14 14'%3E%3Cpath d='M2 6l4 4 6-7' fill='none' stroke='%23000' stroke-width='3'/%3E%3C/svg%3E") center / 14px no-repeat;
}

.framed::after {
  content: "";
  position: absolute;
  top: -15px;
  left: -18px;
  width: 155px;
  height: 59px;
  border: 5px solid #ff2113;
  border-radius: 5px;
}

.legend {
  margin: 20px 0 8px;
  line-height: 20px;
}

.field {
  display: flex;
  align-items: center;
  height: 29px;
  margin-bottom: 4px;
}

.field label {
  width: 94px;
  padding-right: 34px;
  text-align: right;
}

.combo {
  display: flex;
  height: 29px;
  border: 3px solid;
  border-color: #777 #e8e8e8 #e8e8e8 #777;
  background: #fff;
}

.combo.short { width: 122px; }
.combo.mid { width: 140px; }
.combo.long { width: 161px; }

.combo select,
.combo input {
  flex: 1;
  min-width: 0;
  appearance: none;
  padding: 0 0 0 3px;
  border: none;
  background: none;
  color: #000;
  font: inherit;
}

.combo .arrow {
  display: flex;
  align-items: center;
  justify-content: center;
  flex: none;
  width: 25px;
  border: 2px solid;
  border-color: #f8f8f8 #777 #777 #f8f8f8;
  background: #f0f0f0;
  pointer-events: none;
}

.arrow::before {
  content: "";
  border: 6px solid transparent;
  border-top-color: #000;
  border-bottom: none;
}

.watermark {
  align-self: flex-end;
  margin: 0 -37px 9px 0;
  color: #cfcfc8;
  font: 17px/20px "Liberation Mono", monospace;
}

.side-tabs {
  flex: none;
  width: 47px;
  padding: 34px 4px 0 14px;
}

.side-tabs button {
  display: block;
  width: 29px;
  height: 102px;
  padding: 7px 4px 0 0;
  border: 2px solid #8ea6bc;
  border-right: none;
  background: #ebebeb;
  color: #222;
  font-size: 18px;
  line-height: 20px;
  text-align: left;
  writing-mode: vertical-rl;
}

.side-tabs button + button {
  border-top: none;
}
```
